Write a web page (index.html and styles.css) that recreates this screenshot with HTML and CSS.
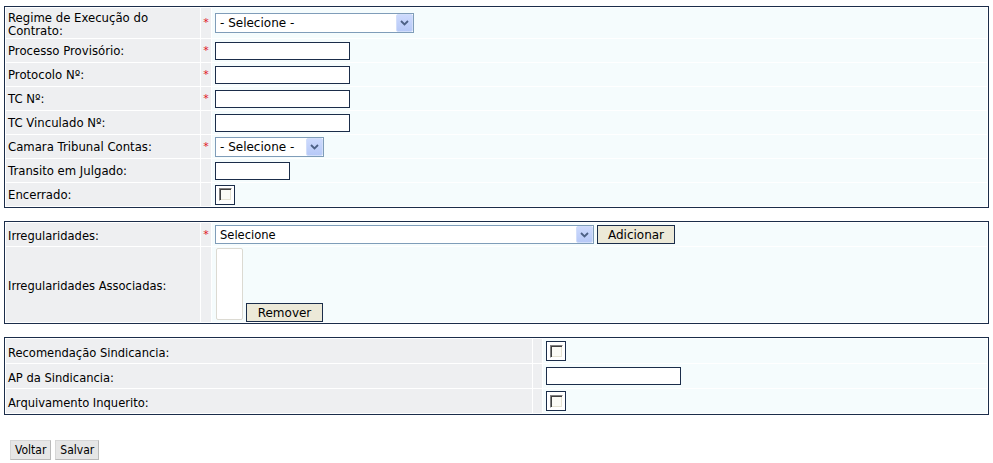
FILE: index.html
```html
<!DOCTYPE html>
<html lang="pt">
<head>
<meta charset="utf-8">
<title>Formulário</title>
<link rel="stylesheet" href="styles.css">
</head>
<body>
<div class="panel panel-main">
  <div class="lbl lbl-first">Regime de Execução do Contrato:</div><div class="req">*</div>
  <div class="fld"><span class="sel sel-regime"><select class="sel-input"><option>- Selecione -</option></select><span class="arrow"><svg width="9" height="6" viewBox="0 0 9 6"><path d="M1 1l3.5 3.5L8 1" fill="none" stroke="#4d6185" stroke-width="1.8"/></svg></span></span></div>

  <div class="lbl">Processo Provisório:</div><div class="req">*</div>
  <div class="fld"><input class="txt txt-long" type="text"></div>

  <div class="lbl">Protocolo Nº:</div><div class="req">*</div>
  <div class="fld"><input class="txt txt-long" type="text"></div>

  <div class="lbl">TC Nº:</div><div class="req">*</div>
  <div class="fld"><input class="txt txt-long" type="text"></div>

  <div class="lbl">TC Vinculado Nº:</div><div class="req"></div>
  <div class="fld"><input class="txt txt-long" type="text"></div>

  <div class="lbl">Camara Tribunal Contas:</div><div class="req">*</div>
  <div class="fld"><span class="sel sel-camara"><select class="sel-input"><option>- Selecione -</option></select><span class="arrow"><svg width="9" height="6" viewBox="0 0 9 6"><path d="M1 1l3.5 3.5L8 1" fill="none" stroke="#4d6185" stroke-width="1.8"/></svg></span></span></div>

  <div class="lbl">Transito em Julgado:</div><div class="req"></div>
  <div class="fld"><input class="txt txt-short" type="text"></div>

  <div class="lbl">Encerrado:</div><div class="req"></div>
  <div class="fld"><span class="chk-frame"><input class="chk" type="checkbox"></span></div>
</div>

<div class="panel panel-irr">
  <div class="lbl lbl-alt">Irregularidades:</div><div class="req">*</div>
  <div class="fld fld-row"><span class="sel sel-irr"><select class="sel-input sel-input-alt"><option>Selecione</option></select><span class="arrow"><svg width="9" height="6" viewBox="0 0 9 6"><path d="M1 1l3.5 3.5L8 1" fill="none" stroke="#4d6185" stroke-width="1.8"/></svg></span></span><button class="btn" type="button">Adicionar</button></div>

  <div class="lbl lbl-alt">Irregularidades Associadas:</div><div class="req"></div>
  <div class="fld fld-list"><select class="listbox" multiple size="4"></select><button class="btn" type="button">Remover</button></div>
</div>

<div class="panel panel-sind">
  <div class="lbl lbl-alt">Recomendação Sindicancia:</div><div class="req"></div>
  <div class="fld"><span class="chk-frame"><input class="chk" type="checkbox"></span></div>

  <div class="lbl lbl-alt">AP da Sindicancia:</div><div class="req"></div>
  <div class="fld"><input class="txt txt-long" type="text"></div>

  <div class="lbl lbl-alt">Arquivamento Inquerito:</div><div class="req"></div>
  <div class="fld"><span class="chk-frame"><input class="chk" type="checkbox"></span></div>
</div>

<div class="actions">
  <button class="btn-plain" type="button">Voltar</button>
  <button class="btn-plain" type="button">Salvar</button>
</div>
</body>
</html>
```

FILE: styles.css
```css
html, body {
  background: #ffffff;
}
body {
  margin: 0;
  padding: 6px 4px 0 4px;
  font-family: "DejaVu Sans", Verdana, sans-serif;
  font-size: 11.7px;
  color: #000;
}

.panel {
  display: grid;
  grid-template-columns: 194px 10px 1fr;
  gap: 1px;
  padding: 1px;
  border: 1px solid #1b2d4a;
  background: #ffffff;
}
.panel-irr {
  margin-top: 13px;
}
.panel-sind {
  margin-top: 13px;
  grid-template-columns: 526px 9px 1fr;
  grid-auto-rows: minmax(24px, auto);
}

.lbl {
  background: #eeeff1;
  padding: 3px 2px 1px 2px;
  line-height: 13px;
  min-height: 23px;
  box-sizing: border-box;
  display: flex;
  align-items: center;
}
.lbl-first {
  padding: 4px 2px 1px 2px;
  line-height: 12.5px;
}
.lbl-alt {
  font-family: "DejaVu Sans Condensed", "DejaVu Sans", Tahoma, sans-serif;
  font-stretch: condensed;
  font-size: 12.8px;
}
.req {
  background: #eeeff1;
  color: #e0141e;
  font-size: 11px;
  display: flex;
  align-items: center;
  justify-content: center;
  padding-bottom: 1px;
  box-sizing: border-box;
}
.fld {
  background: #f5fcfd;
  padding: 1px 3px;
  min-height: 23px;
  box-sizing: border-box;
  display: flex;
  align-items: center;
}
.fld-row {
  gap: 3px;
  padding: 2px 3px;
}
.fld-list {
  align-items: flex-end;
  padding: 1px 3px 1px 4px;
  gap: 3px;
}

.txt {
  box-sizing: border-box;
  height: 18px;
  border: 1px solid #1b2d4a;
  background: #fff;
  padding: 0 2px;
  margin: 0;
  font: inherit;
}
.txt-long {
  width: 135px;
}
.txt-short {
  width: 75px;
}

.sel {
  position: relative;
  display: inline-block;
  height: 20px;
}
.sel-regime { width: 199px; }
.sel-camara { width: 109px; }
.sel-irr { width: 379px; height: 19px; }

.sel-input {
  appearance: none;
  -webkit-appearance: none;
  box-sizing: border-box;
  width: 100%;
  height: 100%;
  margin: 0;
  border: 1px solid #7f9db9;
  background: #fff;
  padding: 0 20px 0 4px;
  font-family: "DejaVu Sans", Verdana, sans-serif;
  font-size: 12px;
  color: #000;
  border-radius: 0;
}
.sel-input-alt {
  font-family: "DejaVu Sans Condensed", "DejaVu Sans", Tahoma, sans-serif;
  font-stretch: condensed;
  font-size: 12.8px;
}
.arrow {
  position: absolute;
  right: 1px;
  top: 1px;
  bottom: 1px;
  width: 17px;
  box-sizing: border-box;
  border: 1px solid #d2defa;
  border-radius: 2px;
  background: linear-gradient(#cddafd, #b7c9f7);
  display: flex;
  align-items: center;
  justify-content: center;
  pointer-events: none;
}

.chk-frame {
  display: inline-flex;
  align-items: center;
  justify-content: center;
  width: 20px;
  height: 20px;
  box-sizing: border-box;
  border: 1px solid #1b2d4a;
  background: #fff;
}
.chk {
  appearance: none;
  -webkit-appearance: none;
  margin: 0;
  width: 13px;
  height: 13px;
  box-sizing: border-box;
  border-top: 1px solid #808080;
  border-left: 1px solid #808080;
  border-right: 1px solid #ffffff;
  border-bottom: 1px solid #ffffff;
  box-shadow: inset 1px 1px 0 #404040, inset -1px -1px 0 #e6e3d3;
  background: #fbfbf6;
}

.btn {
  box-sizing: border-box;
  height: 19px;
  margin: 0;
  padding: 0 4px;
  border: 1px solid #1b2d4a;
  background: #ece9d8;
  font-family: "DejaVu Sans", Verdana, sans-serif;
  font-size: 12px;
  color: #000;
  line-height: 16px;
}
.fld-row .btn {
  width: 78px;
}
.fld-list .btn {
  width: 77px;
  margin-bottom: -1px;
}

.listbox {
  box-sizing: border-box;
  width: 27px;
  height: 72px;
  margin: 0 0 1px 0;
  border: 1px solid #dcdad2;
  background: #fff;
  overflow: hidden;
}

.actions {
  margin-top: 25px;
  padding-left: 6px;
  display: flex;
  gap: 4px;
}
.btn-plain {
  box-sizing: border-box;
  height: 20px;
  margin: 0;
  padding: 0 4px;
  border: 1px solid #d6d6d6;
  border-right-color: #b9b9b9;
  border-bottom-color: #b9b9b9;
  background: #e6e6e6;
  font-family: "DejaVu Sans Condensed", "DejaVu Sans", Tahoma, sans-serif;
  font-stretch: condensed;
  font-size: 12px;
  color: #000;
}
```
